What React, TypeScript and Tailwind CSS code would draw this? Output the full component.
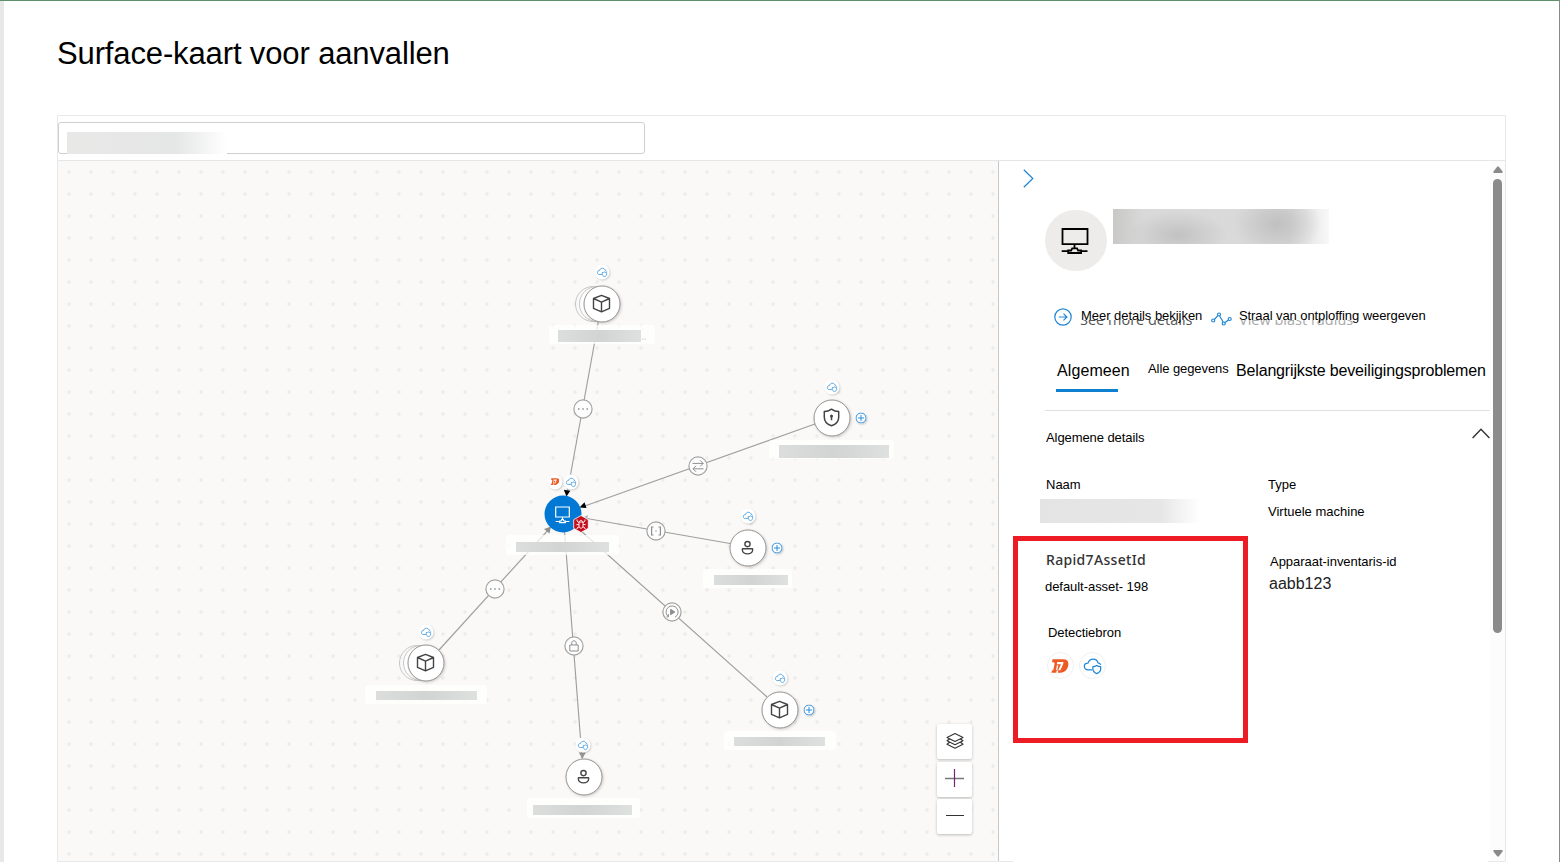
import type { ReactNode } from "react";

type Kind = "cube" | "shield" | "person" | "monitor";

interface GraphNode {
  id: string;
  kind: Kind;
  x: number;
  y: number;
  badge: [number, number];
  plus?: [number, number];
  stacked?: boolean;
  label: [number, number, number, number];
  bar: [number, number, number, number];
}

// Canvas origin: all coordinates in the data below are offset by this point.
const OX = 58;
const OY = 161;

const nodes: GraphNode[] = [
  { id: "a", kind: "cube", x: 601.5, y: 303.5, badge: [602.5, 271.5], stacked: true, label: [549, 325, 106, 19], bar: [558, 330, 83, 12] },
  { id: "b", kind: "shield", x: 831.5, y: 417.5, badge: [832.5, 386.5], plus: [860.5, 417.5], label: [769, 440, 125, 19], bar: [779, 445, 110, 13] },
  { id: "c", kind: "person", x: 747.5, y: 547.5, badge: [748.5, 515.5], plus: [776.5, 547.5], label: [703, 569, 89, 19], bar: [714, 575, 74, 10] },
  { id: "d", kind: "cube", x: 425.5, y: 662.5, badge: [426.5, 631.5], stacked: true, label: [365, 685, 122, 19], bar: [376, 691, 101, 9] },
  { id: "e", kind: "cube", x: 779.5, y: 709.5, badge: [780.5, 677.5], plus: [808.5, 709.5], label: [724, 731, 112, 19], bar: [734, 737, 91, 9] },
  { id: "f", kind: "person", x: 583.5, y: 776.5, badge: [583.5, 744.5], label: [527, 798, 113, 20], bar: [533, 805, 99, 10] },
  { id: "g", kind: "monitor", x: 562.5, y: 513.5, badge: [571.5, 481.5], label: [506, 535, 113, 20], bar: [516, 542, 93, 10] },
];

const edges: [number, number, number, number][] = [
  [598.5, 321, 567, 494],
  [815, 424, 582, 507],
  [730, 543.5, 584, 518],
  [439, 650, 550, 528],
  [767, 697, 580, 530],
  [564.5, 531, 582, 758],
];

function Glyph({ kind, className }: { kind: Kind; className: string }) {
  const common = { className, viewBox: "0 0 20 20", fill: "none", stroke: "currentColor" } as const;
  if (kind === "cube")
    return (
      <svg {...common} strokeWidth="1.4" strokeLinejoin="round">
        <path d="M10 1.800 18 5v9.800l-8 3.600-8-3.600V5zM2 5l8 3.600L18 5M10 8.600v9.800" />
      </svg>
    );
  if (kind === "shield")
    return (
      <svg {...common} strokeWidth="1.500" strokeLinejoin="round">
        <path d="M10 1.700c2.200 1.600 4.600 2.400 7.200 2.400v5.600c0 4.200-2.500 7-7.200 8.600-4.700-1.600-7.200-4.400-7.200-8.600V4.100C5.400 4.100 7.800 3.300 10 1.700z" />
        <circle cx="10" cy="8.500" r="1.500" fill="currentColor" stroke="none" />
        <path d="M10 8.500v4.300" />
      </svg>
    );
  if (kind === "person")
    return (
      <svg {...common} strokeWidth="1.400">
        <circle cx="10" cy="6.600" r="2.600" />
        <path d="M5.400 11.300h9.200c.4 0 .6.2.6.6 0 2.600-2.200 4.500-5.200 4.500s-5.200-1.900-5.200-4.500c0-.4.200-.6.600-.6z" />
      </svg>
    );
  return (
    <svg {...common} strokeWidth="1.200">
      <path d="M3.200 2.500h13.600v10H3.200zM10 12.500v2.300M3.200 17h4M12.800 17h4M7.200 18.200h5.600v-1.700h-1.300l-.7-1.300H9.200l-.7 1.300H7.200z" />
    </svg>
  );
}

function CloudShield({ className }: { className: string }) {
  return (
    <svg className={className} viewBox="0 0 20 20" fill="none" stroke="#1f86d6" strokeWidth="1.300" strokeLinejoin="round">
      <path d="M9.600 14.600H5.200C3 14.600 1.400 13 1.400 11s1.500-3.500 3.500-3.500h.4C6 4.900 8 3.200 10.600 3.200c2.800 0 4.700 1.700 5.200 4.100 1.400.2 2.400 1 2.900 2" />
      <path d="M14.500 9.900c1.200.9 2.600 1.200 4.100 1.200v2.600c0 2.200-1.400 3.700-4.100 4.800-2.700-1.100-4.100-2.600-4.100-4.800v-2.600c1.500 0 2.900-.3 4.100-1.200z" />
    </svg>
  );
}

function OrangeMark({ className }: { className: string }) {
  return (
    <svg className={className} viewBox="0 0 18 14">
      <path d="M1.500.3H12.500c3.300 0 5 1.700 4.900 4.700-.2 4.900-3.400 8.600-8 8.800H6.800l.5-2.300h-1.600L5.300 13.800H.5l.5-2.500h1.300l1.300-6.500-.5-1.500H1z" fill="#ee5a24" />
      <path d="M6.200 3h6.300l-.4 2.200-2.700 6H7.200L10 5.300H5.800zM5.900 6.300h1.300L6.300 11H5z" fill="#fff" />
    </svg>
  );
}

function At({ x, y, children, className = "" }: { x: number; y: number; children: ReactNode; className?: string }) {
  return (
    <div className={`absolute flex -translate-x-1/2 -translate-y-1/2 items-center justify-center ${className}`} style={{ left: x - OX, top: y - OY }}>
      {children}
    </div>
  );
}

const badgeClass = "size-[15px] rounded-full bg-white shadow-[1px_1px_2px_rgba(0,0,0,0.16)]";

function NodeView({ n }: { n: GraphNode }) {
  const main = n.kind === "monitor";
  return (
    <>
      <div
        className="absolute rounded-[3px] bg-white/75"
        style={{ left: n.label[0] - OX, top: n.label[1] - OY, width: n.label[2], height: n.label[3] }}
      />
      <div
        className="absolute bg-linear-to-r from-[#dcdddd] via-[#d2d3d3] to-[#dfe1e1]"
        style={{ left: n.bar[0] - OX, top: n.bar[1] - OY, width: n.bar[2], height: n.bar[3] }}
      />
      {n.stacked && (
        <>
          <At x={n.x - 9} y={n.y} className="size-[36px] rounded-full border border-[#c6c6c6] bg-[#faf9f8]">{null}</At>
          <At x={n.x - 4.5} y={n.y} className="size-[36px] rounded-full border border-[#c6c6c6] bg-white">{null}</At>
        </>
      )}
      <At
        x={n.x}
        y={n.y}
        className={
          main
            ? "size-[37px] rounded-full bg-[#0078d4] text-white"
            : "size-[37px] rounded-full border border-[#979593] bg-white text-[#444] shadow-[1px_1px_3px_rgba(0,0,0,0.18)]"
        }
      >
        <Glyph kind={n.kind} className={main ? "size-[20px] translate-y-[1px]" : "size-[20px]"} />
      </At>
      <At x={n.badge[0] - 0.5} y={n.badge[1]} className={badgeClass}>
        <CloudShield className="size-[11px]" />
      </At>
      {n.plus && (
        <At x={n.plus[0]} y={n.plus[1]} className="size-[11px] rounded-full bg-white shadow-[1px_1px_2px_rgba(0,0,0,0.2)]">
          <svg className="size-[11px] shrink-0" viewBox="0 0 11 11" fill="none" stroke="#2b8ddb">
            <circle cx="5.500" cy="5.500" r="5" />
            <path d="M5.500 2.500v6M2.500 5.500h6" />
          </svg>
        </At>
      )}
    </>
  );
}

function Edges() {
  return (
    <svg className="absolute inset-0 h-[700px] w-[940px]" viewBox="58 161 940 700" fill="none" stroke="#9f9f9f">
      {edges.map(([x1, y1, x2, y2]) => (
        <line key={`${x1}-${y1}`} x1={x1} y1={y1} x2={x2} y2={y2} strokeWidth="1.150" />
      ))}
      <g stroke="none">
        <path d="M566.500 496.500l-2.700-6.700 6.500 1z" fill="#000" />
        <path d="M579.500 507.500l5-5.300 2 5.700z" fill="#000" />
        <path d="M583 517.500l5-2.500-1 5z" fill="#b5b5b5" />
        <path d="M551 526.500l-1.500 7-5.500-4.500z" fill="#8f8f8f" />
        <path d="M582.300 759l-3.500-6.500h7z" fill="#979797" />
        <path d="M642 338.500h1.300v1.500H642zM644.500 338.500h1.300v1.500h-1.300z" fill="#666" />
      </g>
    </svg>
  );
}

function EdgeMarks() {
  const marks: { x: number; y: number; art: ReactNode }[] = [
    { x: 582, y: 408, art: <path d="M5 10h1.500M9.250 10h1.500M13.500 10H15" strokeWidth="1.600" /> },
    { x: 494, y: 588, art: <path d="M5 10h1.500M9.250 10h1.500M13.500 10H15" strokeWidth="1.600" /> },
    { x: 697, y: 465, art: <path d="M4.500 7.400h10.700M12.200 4.400l3 3-3 3M15.500 12.800H5M8 9.800l-3 3 3 3" /> },
    { x: 655, y: 530, art: <path d="M7.500 6H5.600v8h1.900M12.500 6h1.900v8h-1.900M9.300 10h1.400" strokeWidth="1.200" /> },
    { x: 573, y: 645, art: <path d="M5.800 9h8.400v6H5.800zM7.800 9V7c0-1.400.9-2.200 2.200-2.200s2.200.8 2.200 2.200v2" /> },
    {
      x: 671,
      y: 611,
      art: (
        <>
          <path d="M6.400 14.700A6 6 0 1 1 13 15.200M6.400 14.700v-2.600M6.400 14.900H4.500" />
          <path d="M8.600 7.300l4.200 2.700-4.200 2.700z" fill="#8f8f8f" />
        </>
      ),
    },
  ];
  return (
    <>
      {marks.map((m) => (
        <At key={`${m.x}-${m.y}`} x={m.x + 0.5} y={m.y + 0.5}>
          <svg className="size-[21px]" viewBox="-.5 -.5 21 21" fill="none" stroke="#8f8f8f">
            <circle cx="10" cy="10" r="9.100" fill="#fdfdfd" stroke="#a3a3a3" strokeWidth="1.200" />
            {m.art}
          </svg>
        </At>
      ))}
    </>
  );
}

function MapButton({ children }: { children: ReactNode }) {
  return (
    <button className="flex h-[35px] w-[35px] items-center justify-center rounded-[2px] bg-white shadow-[0_1px_3px_rgba(0,0,0,0.25)]">
      {children}
    </button>
  );
}

function AttackMap() {
  return (
    <div className="relative w-[941px] shrink-0 overflow-hidden border-r border-[#c8c8c8] bg-[#faf9f8] bg-[radial-gradient(circle,#ededec_1.400px,transparent_2.100px)] bg-size-[22px_22px]">
      <Edges />
      {nodes.map((n) => (
        <NodeView key={n.id} n={n} />
      ))}
      <EdgeMarks />
      <At x={554.5} y={481.5} className={badgeClass}>
        <OrangeMark className="h-[8px] w-[9px]" />
      </At>
      <At x={581} y={524}>
        <svg className="h-[18px] w-[16px]" viewBox="0 0 16 18">
          <path d="M8 .5l7.300 4.200v8.600L8 17.500.7 13.300V4.700z" fill="#c50f1f" stroke="#fff" strokeWidth=".8" />
          <path
            d="M6 7h4v4.200c0 1.200-.9 2-2 2s-2-.8-2-2zM6.500 7c0-1 .6-1.600 1.500-1.600S9.500 6 9.500 7M6 9.600H3.400M12.600 9.600H10M6 7.500L4 6V4.500M10 7.500L12 6V4.500M6.200 11.700L4 13v1M9.800 11.700L12 13v1"
            fill="none"
            stroke="#fff"
            strokeWidth=".9"
          />
        </svg>
      </At>
      <div className="absolute top-[563px] left-[879px] flex flex-col gap-[2.500px]">
        <MapButton>
          <svg className="size-5 -translate-y-[1px]" viewBox="0 0 20 20" fill="none" stroke="#333" strokeWidth="1.100" strokeLinejoin="round">
            <path d="M10 2.500l8 4-8 4-8-4zM4.500 8L2 9.800l8 4 8-4L15.500 8M4.500 11.300L2 13.200l8 4 8-4-2.500-1.900" />
          </svg>
        </MapButton>
        <MapButton>
          <svg className="h-[20px] w-[19px]" viewBox="0 0 19 20" fill="none">
            <path d="M0 9.500h19" stroke="#777" strokeWidth="1.500" />
            <path d="M9.500 0v18" stroke="#742774" strokeWidth="1.200" />
          </svg>
        </MapButton>
        <MapButton>
          <svg className="h-[3px] w-[18px] -translate-y-[1px]" viewBox="0 0 18 3">
            <path d="M0 1.500h18" stroke="#333" />
          </svg>
        </MapButton>
      </div>
    </div>
  );
}

function DetailsPanel() {
  return (
    <aside className="flex w-[491px] shrink-0 flex-col text-[13px] leading-[16px] text-black">
      <div className="flex h-[48px] items-start pt-[7.500px] pl-[24px]">
        <svg className="h-[19px] w-[11px]" viewBox="0 0 11 19" fill="none" stroke="#1f86d6" strokeWidth="1.200">
          <path d="M.8 .7l9 8.800-9 8.800" />
        </svg>
      </div>

      <div className="flex h-[93px] items-start pl-[46px]">
        <div className="mt-px flex h-[61px] w-[62px] items-center justify-center rounded-full bg-[#edecea] pr-[2px]">
          <svg className="h-[26px] w-[28px]" viewBox="0 0 28 26" fill="none" stroke="#000" strokeWidth="1.800">
            <path d="M1.500 1h25v15.200h-25zM13.500 16.200v4M.7 23.100h6.500M20 23.100h6.500M7.200 25v-2.500h3l1-2.200h4.900l1 2.200h3V25z" />
          </svg>
        </div>
        <div className="ml-[6px] h-[35px] w-[216px] bg-[radial-gradient(50px_24px_at_65px_26px,#c2c2c2_0%,transparent_100%),radial-gradient(44px_34px_at_164px_15px,#c0c0c0_0%,transparent_100%),linear-gradient(90deg,#c9c8c7,#d9d9d9_14%,#dadada_82%,#f8f8f8)]" />
      </div>

      <div className="flex h-[48px] items-start pt-[6px] pl-[55px]">
        <svg className="size-[18px]" viewBox="0 0 18 18" fill="none" stroke="#1f86d6" strokeWidth="1.200">
          <circle cx="9" cy="9" r="8.200" />
          <path d="M4.800 9h8M9.500 5.600L12.900 9l-3.400 3.400" />
        </svg>
        <div className="relative ml-[9px] w-[130px]">
          <span className="absolute top-[12px] left-[-1px] flex h-[5px] items-end overflow-hidden font-['Open_Sans',sans-serif] text-[14.500px] whitespace-nowrap text-[#555]">
            <span className="mb-[-2.500px]">See more details</span>
          </span>
          <span className="relative tracking-[-0.040px] whitespace-nowrap">Meer details bekijken</span>
        </div>
        <svg className="mt-[4px] h-[14px] w-[21px]" viewBox="0 0 21 14" fill="none" stroke="#1f86d6" strokeWidth="1.200">
          <circle cx="2.200" cy="8.500" r="1.500" />
          <circle cx="8" cy="2.500" r="1.500" />
          <circle cx="12.700" cy="11.500" r="1.500" />
          <circle cx="18.700" cy="7" r="1.500" />
          <path d="M3.300 7.500l3.600-3.800M8.600 4l3.600 6M14 10.600l3.500-2.700" />
        </svg>
        <div className="relative ml-[7px]">
          <span className="absolute top-[12px] left-0 flex h-[5px] items-end overflow-hidden font-['Open_Sans',sans-serif] text-[14.500px] whitespace-nowrap text-[#aaa]">
            <span className="mb-[-2.500px]">View blast radius</span>
          </span>
          <span className="relative tracking-[-0.080px] whitespace-nowrap">Straal van ontploffing weergeven</span>
        </div>
      </div>

      <div className="ml-[46px] flex h-[61px] items-start border-b border-[#e1dfdd] pl-[12px]">
        <div className="flex w-[91px] flex-col pt-[11px]">
          <span className="text-[16px] leading-[20px] tracking-[0.100px]">Algemeen</span>
          <span className="mt-[8px] -ml-px h-[3px] w-[62px] bg-[#0f7fd0]" />
        </div>
        <span className="w-[88px] pt-[11px] tracking-[-0.080px] whitespace-nowrap">Alle gegevens</span>
        <span className="pt-[11px] text-[16px] leading-[20px] tracking-[-0.160px] whitespace-nowrap">Belangrijkste beveiligingsproblemen</span>
      </div>

      <div className="ml-[47px] flex h-[65px] items-start justify-between pt-[17px]">
        <span className="pt-[2px] tracking-[-0.080px]">Algemene details</span>
        <svg className="h-[11px] w-[18px]" viewBox="0 0 18 11" fill="none" stroke="#333" strokeWidth="1.400">
          <path d="M.6 10L9 1.200 17.400 10" />
        </svg>
      </div>

      <div className="flex h-[60px]">
        <div className="w-[228px] pl-[41px]">
          <div className="pt-px pl-[6px]">Naam</div>
          <div className="mt-[6px] h-[24px] w-[160px] bg-linear-to-r from-[#e4e4e4] via-[#e6e6e6] via-75% to-white" />
        </div>
        <div className="pt-px pl-[41px]">
          <div>Type</div>
          <div className="mt-[11px]">Virtuele machine</div>
        </div>
      </div>

      <div className="flex items-start">
        <div className="ml-[14px] h-[207px] w-[235px] border-[5px] border-[#ed1c24] pt-[10px] pl-[27px]">
          <div className="pl-px font-['Noto_Sans',sans-serif] text-[14px] leading-[18px] font-medium tracking-[0.320px] text-[#333]">Rapid7AssetId</div>
          <div className="mt-[10px] tracking-[-0.050px]">default-asset- 198</div>
          <div className="mt-[30px] pl-[3px] tracking-[-0.050px]">Detectiebron</div>
          <div className="mt-[11px] ml-[2px] flex gap-[5px]">
            <span className="flex size-[27px] items-center justify-center rounded-full border border-[#efefef] pr-px">
              <OrangeMark className="h-[14px] w-[18px]" />
            </span>
            <span className="flex size-[27px] items-center justify-center rounded-full border border-[#efefef]">
              <CloudShield className="size-[19px]" />
            </span>
          </div>
        </div>
        <div className="ml-[21px] pt-[18px]">
          <div className="pl-px tracking-[-0.030px] whitespace-nowrap">Apparaat-inventaris-id</div>
          <div className="mt-[4px] text-[16px] leading-[20px] text-[#222]">aabb123</div>
        </div>
      </div>
    </aside>
  );
}

function Scrollbar() {
  return (
    <div className="flex w-[15px] shrink-0 flex-col items-center bg-[#fcfcfc] pt-[5px] pb-[4px]">
      <svg className="h-[7px] w-[10px]" viewBox="0 0 10 7" fill="#8a8a8a">
        <path d="M4.300.5h1.400L9.500 5.500v1.500H.5V5.500z" />
      </svg>
      <div className="mt-[6px] h-[454px] w-[9px] rounded-full bg-[#8b8b8b]" />
      <div className="grow" />
      <svg className="h-[7px] w-[10px]" viewBox="0 0 10 7" fill="#8a8a8a">
        <path d="M4.300 6.500h1.400L9.500 1.500V0H.5v1.500z" />
      </svg>
    </div>
  );
}

export default function App() {
  return (
    <div className="h-[865px] w-[1563px] overflow-hidden bg-white font-['Liberation_Sans',Arial,sans-serif]">
      <div className="flex h-[862px] w-[1560px] flex-col border-t border-r border-t-[#5f8f6a] border-r-[#8a8a8a]">
        <div className="h-[861px] border-l-4 border-[#e8e8e8] pl-[53px]">
          <h1 className="h-[114px] pt-[35px] text-[31px] leading-[36px] tracking-[-0.130px] text-black">Surface-kaart voor aanvallen</h1>
          <main className="relative flex h-[747px] w-[1449px] flex-col border border-[#e8e8e8]">
            <div className="flex h-[45px] shrink-0 items-start border-b border-[#e6e6e6] pt-[6px]">
              <div className="h-[32px] w-[587px] rounded-[3px] border border-[#cfcfcf] pt-[9px] pl-[8px]">
                <div className="h-[22px] w-[160px] bg-linear-to-r from-[#e8e8e7] via-[#e5e6e6] via-68% to-white" />
              </div>
            </div>
            <div className="flex h-[700px]">
              <AttackMap />
              <DetailsPanel />
              <Scrollbar />
            </div>
            <div className="absolute -bottom-px left-[955px] h-px w-[475px] bg-white" />
          </main>
        </div>
      </div>
    </div>
  );
}
